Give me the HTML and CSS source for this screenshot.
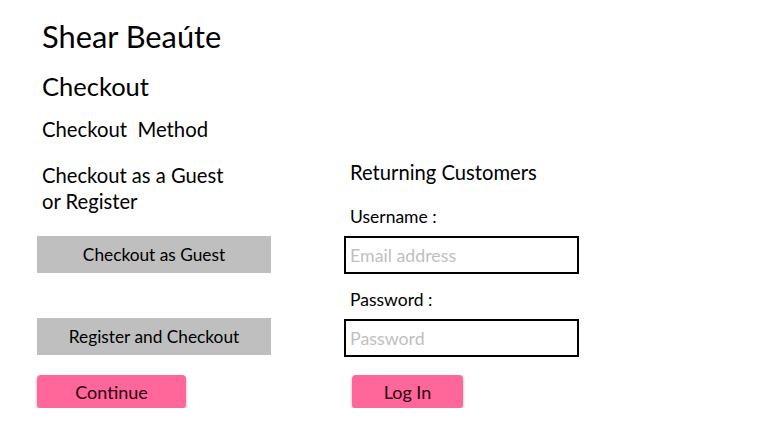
FILE: index.html
```html
<!DOCTYPE html>
<html>
<head>
<meta charset="utf-8">
<link rel="stylesheet" href="styles.css">
</head>
<body>
<div class="page">
  <h1 class="brand">Shear Beaúte</h1>
  <h2 class="title">Checkout</h2>
  <h3 class="method">Checkout&nbsp; Method</h3>
  <div class="columns">
    <div class="col col-left">
      <p class="lead">Checkout as a Guest<br>or Register</p>
      <div class="gray-btn">Checkout as Guest</div>
      <div class="gray-btn second">Register and Checkout</div>
      <div class="pink-btn continue">Continue</div>
    </div>
    <div class="col col-right">
      <p class="lead right-lead">Returning Customers</p>
      <label class="field-label user">Username :</label>
      <div class="input"><span class="placeholder">Email address</span></div>
      <label class="field-label pw">Password :</label>
      <div class="input"><span class="placeholder">Password</span></div>
      <div class="pink-btn login">Log In</div>
    </div>
  </div>
</div>
</body>
</html>
```
FILE: styles.css
```css
html, body {
  margin: 0;
  padding: 0;
  background: #ffffff;
}
body {
  font-family: Lato, "Open Sans", sans-serif;
  color: #000;
}
.page {
  padding: 20px 0 0 37px;
}
.brand, .title, .method {
  margin: 0;
  padding-left: 5px;
  font-weight: 400;
}
.brand {
  font-size: 30.8px;
  line-height: 34px;
}
.title {
  font-size: 25.5px;
  line-height: 30px;
  margin-top: 17px;
}
.method {
  font-size: 20.3px;
  line-height: 26px;
  margin-top: 15px;
}
.columns {
  display: grid;
  grid-template-columns: 307px 235px;
  margin-top: 20px;
}
.col {
  display: flex;
  flex-direction: column;
}
.lead {
  margin: 0;
  padding-left: 5px;
  font-size: 20.2px;
  line-height: 26px;
}
.col-left .lead {
  height: 74px;
}
.right-lead {
  margin-top: -3px;
  padding-left: 6px;
}
.gray-btn {
  width: 234px;
  height: 37px;
  background: #bfbfbf;
  display: flex;
  align-items: center;
  justify-content: center;
  font-size: 17.3px;
}
.gray-btn.second {
  margin-top: 45px;
}
.pink-btn {
  height: 33px;
  background: #ff6699;
  border-radius: 4px;
  box-shadow: 0 2px 3px rgba(0, 0, 0, 0.35);
  display: flex;
  align-items: center;
  justify-content: center;
  font-size: 18px;
  color: #2a0010;
  margin-top: 20px;
}
.continue {
  width: 149px;
}
.login {
  width: 111px;
  margin-left: 8px;
  margin-top: 18px;
}
.field-label {
  display: block;
  padding-left: 6px;
  font-size: 17.5px;
  line-height: 22px;
}
.field-label.user {
  margin-top: 21px;
  margin-bottom: 8px;
}
.field-label.pw {
  margin-top: 15px;
  margin-bottom: 8px;
}
.input {
  box-sizing: border-box;
  height: 38px;
  border: 2px solid #000;
  display: flex;
  align-items: center;
  padding-left: 4px;
}
.placeholder {
  font-size: 17.8px;
  color: #bfbfbf;
}
```
